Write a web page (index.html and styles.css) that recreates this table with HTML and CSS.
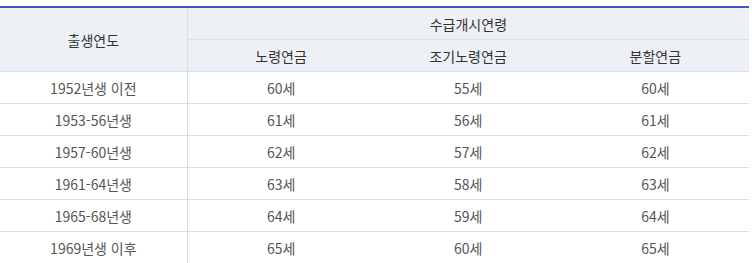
FILE: index.html
```html
<!DOCTYPE html>
<html lang="ko">
<head>
<meta charset="utf-8">
<link rel="stylesheet" href="styles.css">
</head>
<body>
<div class="wrap">
<table class="tbl">
  <colgroup><col class="c"><col class="c"><col class="c"><col class="c"></colgroup>
  <thead>
    <tr><th rowspan="2" class="first">출생연도</th><th colspan="3">수급개시연령</th></tr>
    <tr><th>노령연금</th><th>조기노령연금</th><th>분할연금</th></tr>
  </thead>
  <tbody>
    <tr><td class="first">1952년생 이전</td><td>60세</td><td>55세</td><td>60세</td></tr>
    <tr><td class="first">1953-56년생</td><td>61세</td><td>56세</td><td>61세</td></tr>
    <tr><td class="first">1957-60년생</td><td>62세</td><td>57세</td><td>62세</td></tr>
    <tr><td class="first">1961-64년생</td><td>63세</td><td>58세</td><td>63세</td></tr>
    <tr><td class="first">1965-68년생</td><td>64세</td><td>59세</td><td>64세</td></tr>
    <tr><td class="first">1969년생 이후</td><td>65세</td><td>60세</td><td>65세</td></tr>
  </tbody>
</table>
</div>
</body>
</html>
```
FILE: styles.css
```css
html, body { margin: 0; padding: 0; background: #fff; }
.wrap { padding-top: 6px; width: 749px; }
.tbl {
  width: 100%;
  border-collapse: collapse;
  table-layout: fixed;
  border-top: 2px solid #4158c2;
  font-family: "Noto Sans CJK KR", "Noto Sans", sans-serif;
  font-size: 14px;
}
.tbl th, .tbl td {
  height: 31px;
  padding: 0;
  text-align: center;
  vertical-align: middle;
  border-bottom: 1px solid #d5e0e7;
  line-height: 16px;
}
.tbl th {
  background: #edf1f5;
  color: #333;
  font-weight: 400;
}
.tbl td { color: #555; }
.tbl .first { border-right: 1px solid #d5e0e7; }
```
